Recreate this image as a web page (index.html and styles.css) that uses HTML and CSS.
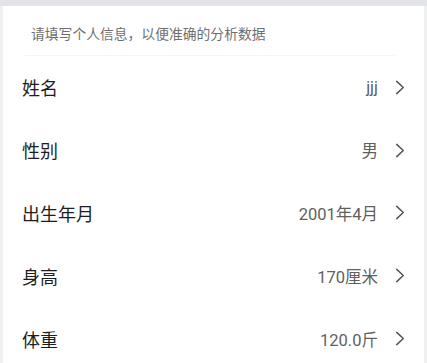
FILE: index.html
```html
<!DOCTYPE html>
<html lang="zh-CN">
<head>
<meta charset="utf-8">
<link rel="stylesheet" href="styles.css">
</head>
<body>
<div class="topband"></div>
<div class="card">
  <div class="header"><span class="hint">请填写个人信息，以便准确的分析数据</span></div>
  <div class="row"><span class="label">姓名</span><span class="value">jjj</span><svg class="chev" viewBox="0 0 10 16"><path d="M1.5 1.5 L8.5 8 L1.5 14.5" /></svg></div>
  <div class="row"><span class="label">性别</span><span class="value">男</span><svg class="chev" viewBox="0 0 10 16"><path d="M1.5 1.5 L8.5 8 L1.5 14.5" /></svg></div>
  <div class="row"><span class="label">出生年月</span><span class="value">2001年4月</span><svg class="chev" viewBox="0 0 10 16"><path d="M1.5 1.5 L8.5 8 L1.5 14.5" /></svg></div>
  <div class="row"><span class="label">身高</span><span class="value">170厘米</span><svg class="chev" viewBox="0 0 10 16"><path d="M1.5 1.5 L8.5 8 L1.5 14.5" /></svg></div>
  <div class="row"><span class="label">体重</span><span class="value">120.0斤</span><svg class="chev" viewBox="0 0 10 16"><path d="M1.5 1.5 L8.5 8 L1.5 14.5" /></svg></div>
</div>
</body>
</html>
```
FILE: styles.css
```css
html, body {
  margin: 0;
  padding: 0;
  height: 100%;
  overflow: hidden;
}
body {
  background: #eef0f2;
  font-family: "Noto Sans CJK SC", "Noto Sans", sans-serif;
  display: flex;
  flex-direction: column;
}
.topband {
  height: 6px;
  background: #e3e4e9;
  flex: none;
}
.card {
  background: #ffffff;
  margin: 0 3px;
  flex: 1;
  display: flex;
  flex-direction: column;
}
.header {
  height: 50px;
  box-sizing: border-box;
  padding: 17px 0 0 28px;
  position: relative;
}
.header::after {
  content: "";
  position: absolute;
  left: 21px;
  right: 29px;
  bottom: 0;
  height: 1px;
  background: #f7f7f8;
}
.hint {
  font-size: 13.8px;
  line-height: 20px;
  color: #6f6f6f;
  display: block;
}
.row {
  height: 62.8px;
  flex: none;
  display: flex;
  align-items: center;
  padding: 0 19px 0 19px;
}
.label {
  font-size: 18px;
  color: #1e1e1e;
  flex: 1;
}
.value {
  font-family: "Roboto", "Noto Sans CJK SC", sans-serif;
  font-size: 16.5px;
  color: #5f5f5f;
  margin-right: 17px;
}
.chev {
  width: 10px;
  height: 15px;
  fill: none;
  stroke: #555555;
  stroke-width: 1.6;
  stroke-linecap: round;
  stroke-linejoin: round;
}
```
